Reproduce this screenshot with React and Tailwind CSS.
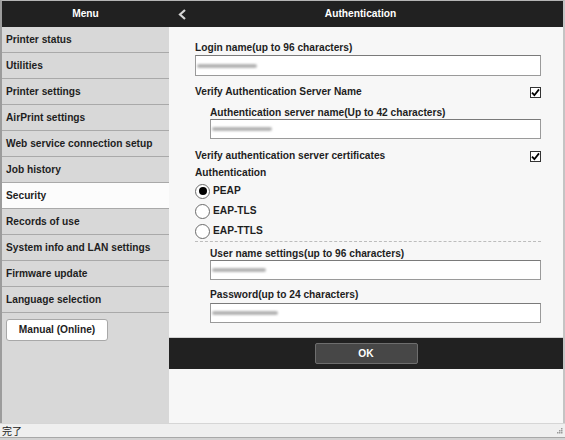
import React from "react";

const menu = [
  "Printer status",
  "Utilities",
  "Printer settings",
  "AirPrint settings",
  "Web service connection setup",
  "Job history",
  "Security",
  "Records of use",
  "System info and LAN settings",
  "Firmware update",
  "Language selection",
];

function Input({ bar, tall }) {
  return (
    <div
      className={`flex items-center bg-white border border-[#9a9a9a] border-t-[#7a7a7a] pl-[1px] ${tall ? "h-[21px]" : "h-[20px]"}`}
    >
      <div className="h-[4px] rounded-full bg-[#b4b4b4] blur-[1px]" style={{ width: bar }} />
    </div>
  );
}

function Check() {
  return (
    <div className="w-[11px] h-[11px] border border-[#333] bg-white flex items-center justify-center">
      <svg width="9" height="9" viewBox="0 0 9 9">
        <path d="M1 4.6 L3.4 7.2 L8 1.4" fill="none" stroke="#000" strokeWidth="1.8" />
      </svg>
    </div>
  );
}

function Radio({ label, on }) {
  return (
    <div className="h-[20px] flex items-center gap-[3px]">
      <div className="w-[15px] h-[15px] rounded-full border border-[#6b6b6b] bg-white flex items-center justify-center">
        {on && <div className="w-[8px] h-[8px] rounded-full bg-black" />}
      </div>
      <span>{label}</span>
    </div>
  );
}

export default function App() {
  return (
    <div className="w-[565px] h-[440px] flex flex-col bg-[#f0f0f0] font-[Liberation_Sans,Arial,sans-serif] text-[10.2px] leading-[12px] font-bold text-[#1e1e1e] overflow-hidden">
      <div className="h-[423px] flex border-t border-t-[#b5b5b5] border-l-2 border-l-[#9c9c9c] border-r-2 border-r-[#c4c4c4]">
        {/* sidebar */}
        <div className="w-[167px] bg-[#d8d8d8] flex flex-col">
          <div className="h-[26px] bg-[#212121] text-white flex items-center justify-center">Menu</div>
          {menu.map((m) => (
            <div
              key={m}
              className={`h-[26px] border-b border-[#a9a9a9] flex items-center pl-[4px] ${m === "Security" ? "bg-[#fcfcfc]" : ""}`}
            >
              {m}
            </div>
          ))}
          <div className="pl-[4px] pt-[6px]">
            <button className="w-[102px] h-[22px] bg-white border border-[#a8a8a8] rounded-[3px] font-bold text-[#1e1e1e]">
              Manual (Online)
            </button>
          </div>
        </div>

        {/* main */}
        <div className="flex-1 bg-[#f7f7f7] flex flex-col">
          <div className="h-[26px] bg-[#212121] text-white flex items-center relative">
            <svg className="absolute left-[9px] top-[8px]" width="9" height="11" viewBox="0 0 9 11">
              <path d="M7 1 L2 5.5 L7 10" fill="none" stroke="#d6d6d6" strokeWidth="2.2" />
            </svg>
            <div className="flex-1 text-center pr-[11px]">Authentication</div>
          </div>

          <div className="pl-[26px] pr-[22px] pt-[15px] flex flex-col">
            <div>Login name(up to 96 characters)</div>
            <div className="mt-[1px]">
              <Input bar="60px" tall />
            </div>

            <div className="mt-[10px] flex items-center justify-between">
              <span>Verify Authentication Server Name</span>
              <Check />
            </div>

            <div className="pl-[15px] mt-[9px]">
              <div>Authentication server name(Up to 42 characters)</div>
              <Input bar="60px" />
            </div>

            <div className="mt-[11px] flex items-center justify-between">
              <span>Verify authentication server certificates</span>
              <Check />
            </div>

            <div className="mt-[5px]">Authentication</div>
            <div className="mt-[2px] flex flex-col">
              <Radio label="PEAP" on />
              <Radio label="EAP-TLS" />
              <Radio label="EAP-TTLS" />
            </div>
            <div className="border-t border-dashed border-[#bdbdbd]" />

            <div className="pl-[15px] mt-[6px]">
              <div>User name settings(up to 96 characters)</div>
              <Input bar="54px" />
              <div className="mt-[9px] mb-[2px]">Password(up to 24 characters)</div>
              <Input bar="66px" />
            </div>
          </div>

          <div className="mt-[14px] h-[32px] border-t border-[#d2d2d2] bg-[#212121] flex items-center justify-center">
            <button className="w-[103px] h-[21px] bg-[#474747] border border-[#6e6e6e] rounded-[2px] text-white font-bold">
              OK
            </button>
          </div>
        </div>
      </div>

      {/* status bar */}
      <div className="h-[14px] border-t border-[#d6d6d6] bg-[#efefef] flex items-center justify-between pl-[2px] pr-[2px]">
        <span className="font-['Noto_Sans_CJK_JP',sans-serif] font-normal text-[10px] leading-[12px] text-[#222]">完了</span>
        <svg width="7" height="7" viewBox="0 0 7 7">
          <rect x="5" y="1" width="1.5" height="1.5" fill="#9a9a9a" />
          <rect x="3" y="3" width="1.5" height="1.5" fill="#9a9a9a" />
          <rect x="5" y="3" width="1.5" height="1.5" fill="#9a9a9a" />
          <rect x="1" y="5" width="1.5" height="1.5" fill="#9a9a9a" />
          <rect x="3" y="5" width="1.5" height="1.5" fill="#9a9a9a" />
          <rect x="5" y="5" width="1.5" height="1.5" fill="#9a9a9a" />
        </svg>
      </div>
      <div className="flex-1 border-t border-[#a8a8a8] bg-[#d2d2d2]" />
    </div>
  );
}
